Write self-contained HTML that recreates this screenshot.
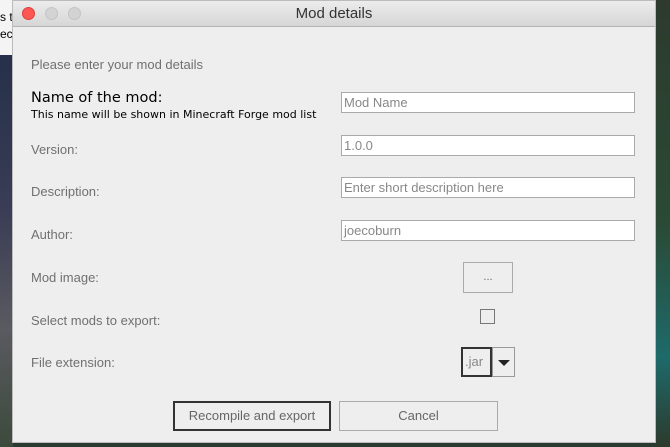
<!DOCTYPE html>
<html><head><style>
body{margin:0;width:670px;height:447px;overflow:hidden;position:relative;background:#2a3a30;font-family:"Liberation Sans",sans-serif}
.bgtop{position:absolute;left:0;top:0;width:13px;height:55px;background:#f4f4f4;font-size:12px;color:#000;line-height:17px;padding-top:9px;white-space:nowrap;overflow:hidden}
.bgl{position:absolute;left:0;top:55px;width:13px;height:392px;background:linear-gradient(#26304a,#3a3d55 40%,#5a5a60 70%,#3c4a3c)}
.bgr{position:absolute;left:656px;top:0;width:14px;height:447px;background:linear-gradient(#2d3a2d,#2a4a35 50%,#1e6a6a 80%,#2c3a2c)}
.win{position:absolute;left:12px;top:0;width:644px;height:443px;background:#eeeeee;border:1px solid #bbb;box-sizing:border-box}
.tb{position:absolute;left:0;top:0;width:100%;height:25px;background:linear-gradient(#ececec,#d6d6d6);border-bottom:1px solid #b4b4b4;text-align:center;font-size:15px;line-height:26px;color:#333}
.dot{position:absolute;top:6px;width:13px;height:13px;border-radius:50%;background:#d3d3d3;border:1px solid #c4c4c4;box-sizing:border-box}
.t{position:absolute;font-size:13px;color:#707070;white-space:nowrap}
.in{position:absolute;left:328px;width:294px;height:21px;background:#fff;border:1px solid #aaa;box-sizing:border-box;font-size:13px;color:#888;line-height:19px;padding-left:2px}
.btn{position:absolute;background:#eee;border:1px solid #aaa;box-sizing:border-box;text-align:center;font-size:13px;color:#666}
</style></head><body>
<div class="bgtop">s t<br>ec</div>
<div class="bgl"></div><div class="bgr"></div>
<div class="win">
<div class="tb">Mod details
<div class="dot" style="left:9px;background:#fc5753;border-color:#df3e3a"></div>
<div class="dot" style="left:32px"></div>
<div class="dot" style="left:55px"></div></div>
<div class="t" style="left:18px;top:56px">Please enter your mod details</div>
<div class="t" style="left:18px;top:89px;color:#000;font-size:14.5px;font-family:'DejaVu Sans',sans-serif">Name of the mod:</div>
<div class="t" style="left:18px;top:107px;color:#000;font-size:11px;font-family:'DejaVu Sans',sans-serif">This name will be shown in Minecraft Forge mod list</div>
<div class="in" style="top:91px">Mod Name</div>
<div class="t" style="left:18px;top:141px">Version:</div>
<div class="in" style="top:134px">1.0.0</div>
<div class="t" style="left:18px;top:183px">Description:</div>
<div class="in" style="top:176px">Enter short description here</div>
<div class="t" style="left:18px;top:226px">Author:</div>
<div class="in" style="top:219px">joecoburn</div>
<div class="t" style="left:18px;top:269px">Mod image:</div>
<div class="btn" style="left:450px;top:261px;width:50px;height:31px;line-height:28px;font-size:11px">...</div>
<div class="t" style="left:18px;top:312px">Select mods to export:</div>
<div style="position:absolute;left:467px;top:308px;width:15px;height:15px;border:1px solid #777;box-sizing:border-box;background:#eee"></div>
<div class="t" style="left:18px;top:354px">File extension:</div>
<div class="btn" style="left:448px;top:346px;width:31px;height:30px;border:2px solid #333;line-height:26px;text-align:left;padding-left:2px;color:#888">.jar</div>
<div class="btn" style="left:479px;top:346px;width:23px;height:30px;border-color:#999"><div style="position:absolute;left:5px;top:12px;border-left:6px solid transparent;border-right:6px solid transparent;border-top:6px solid #222"></div></div>
<div class="btn" style="left:160px;top:400px;width:158px;height:30px;border:2px solid #333;line-height:26px">Recompile and export</div>
<div class="btn" style="left:326px;top:400px;width:159px;height:30px;line-height:28px">Cancel</div>
</div>
</body></html>
